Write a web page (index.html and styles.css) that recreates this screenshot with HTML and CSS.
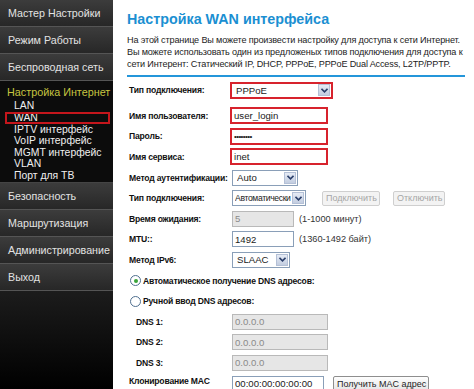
FILE: index.html
```html
<!DOCTYPE html>
<html lang="ru">
<head>
    <meta charset="UTF-8">
    <meta name="viewport" content="width=device-width, initial-scale=1.0">
    <title>Настройка WAN интерфейса</title>
    <link rel="stylesheet" href="styles.css">
</head>
<body>
    <div class="page">
        <!-- Left menu -->
        <nav class="sidebar">
            <div class="menu-item">Мастер Настройки</div>
            <div class="menu-item">Режим Работы</div>
            <div class="menu-item">Беспроводная сеть</div>
            <div class="menu-group">
                <div class="group-title">Настройка Интернет</div>
                <ul class="submenu">
                    <li>LAN</li>
                    <li class="active">WAN</li>
                    <li>IPTV интерфейс</li>
                    <li>VoIP интерфейс</li>
                    <li>MGMT интерфейс</li>
                    <li>VLAN</li>
                    <li>Порт для ТВ</li>
                </ul>
            </div>
            <div class="menu-item">Безопасность</div>
            <div class="menu-item">Маршрутизация</div>
            <div class="menu-item">Администрирование</div>
            <div class="menu-item">Выход</div>
            <div class="sidebar-fill"></div>
        </nav>

        <!-- Main content -->
        <main class="content">
            <h1>Настройка WAN интерфейса</h1>
            <p class="intro">На этой странице Вы можете произвести настройку для доступа к сети Интернет.<br>Вы можете использовать один из предложеных типов подключения для доступа к<br>сети Интерент: Статический IP, DHCP, PPPoE, PPPoE Dual Access, L2TP/PPTP.</p>

            <div class="form">
                <div class="row first">
                    <label class="label">Тип подключения:</label>
                    <span class="select hl w-type"><select><option>PPPoE</option></select><span class="arrow"><svg width="7" height="5" viewBox="0 0 7 5"><path d="M0.5 0.8 L3.5 3.8 L6.5 0.8" fill="none" stroke="#2b3f6b" stroke-width="1.6"/></svg></span></span>
                </div>
                <div class="row">
                    <label class="label">Имя пользователя:</label>
                    <input type="text" class="field hl w-login" value="user_login">
                </div>
                <div class="row">
                    <label class="label">Пароль:</label>
                    <input type="password" class="field hl w-login" value="password">
                </div>
                <div class="row">
                    <label class="label">Имя сервиса:</label>
                    <input type="text" class="field hl w-login" value="inet">
                </div>
                <div class="row">
                    <label class="label">Метод аутентификации:</label>
                    <span class="select w-auth"><select><option>Auto</option></select><span class="arrow"><svg width="7" height="5" viewBox="0 0 7 5"><path d="M0.5 0.8 L3.5 3.8 L6.5 0.8" fill="none" stroke="#2b3f6b" stroke-width="1.6"/></svg></span></span>
                </div>
                <div class="row">
                    <label class="label">Тип подключения:</label>
                    <span class="select w-conn"><select><option>Автоматически</option></select><span class="arrow"><svg width="7" height="5" viewBox="0 0 7 5"><path d="M0.5 0.8 L3.5 3.8 L6.5 0.8" fill="none" stroke="#2b3f6b" stroke-width="1.6"/></svg></span></span>
                    <button class="btn btn-connect" disabled>Подключить</button>
                    <button class="btn btn-disconnect" disabled>Отключить</button>
                </div>
                <div class="row">
                    <label class="label">Время ожидания:</label>
                    <input type="text" class="field w-short" value="5" disabled>
                    <span class="hint">(1-1000 минут)</span>
                </div>
                <div class="row">
                    <label class="label">MTU::</label>
                    <input type="text" class="field w-short" value="1492">
                    <span class="hint">(1360-1492 байт)</span>
                </div>
                <div class="row">
                    <label class="label">Метод IPv6:</label>
                    <span class="select w-ipv6"><select><option>SLAAC</option></select><span class="arrow"><svg width="7" height="5" viewBox="0 0 7 5"><path d="M0.5 0.8 L3.5 3.8 L6.5 0.8" fill="none" stroke="#2b3f6b" stroke-width="1.6"/></svg></span></span>
                </div>
                <div class="row radio-row">
                    <span class="radio checked"></span>
                    <span class="radio-label">Автоматическое получение DNS адресов:</span>
                </div>
                <div class="row radio-row">
                    <span class="radio"></span>
                    <span class="radio-label">Ручной ввод DNS адресов:</span>
                </div>
                <div class="row">
                    <label class="label dns">DNS 1:</label>
                    <input type="text" class="field w-dns" value="0.0.0.0" disabled>
                </div>
                <div class="row">
                    <label class="label dns">DNS 2:</label>
                    <input type="text" class="field w-dns" value="0.0.0.0" disabled>
                </div>
                <div class="row">
                    <label class="label dns">DNS 3:</label>
                    <input type="text" class="field w-dns" value="0.0.0.0" disabled>
                </div>
                <div class="row">
                    <label class="label two-line">Клонирование MAC адреса:</label>
                    <input type="text" class="field w-mac" value="00:00:00:00:00:00">
                    <button class="btn btn-mac">Получить MAC адрес</button>
                </div>
            </div>
        </main>
    </div>
</body>
</html>
```

FILE: styles.css
```css
body {
    margin: 0;
    background: #fff;
    font-family: "Liberation Sans", Arial, sans-serif;
    overflow: hidden;
}
.page {
    display: flex;
    width: 474px;
    height: 389px;
    overflow: hidden;
}

/* sidebar */
.sidebar {
    width: 113px;
    flex-shrink: 0;
    display: flex;
    flex-direction: column;
    background: #000;
}
.menu-item {
    height: 26px;
    line-height: 26px;
    padding-left: 8px;
    font-size: 10.7px;
    color: #e2e2e2;
    background: linear-gradient(#3c3c3c, #272727);
    border-bottom: 1px solid #555;
    white-space: nowrap;
}
.menu-group {
    background: #0c0c0c;
    height: 102px;
    padding-top: 4px;
    box-sizing: border-box;
    border-bottom: 1px solid #444;
}
.group-title {
    font-size: 10.8px;
    color: #c7c540;
    padding-left: 7px;
    line-height: 15px;
    white-space: nowrap;
}
.submenu {
    list-style: none;
    margin: 0;
    padding: 0;
}
.submenu li {
    font-size: 10.4px;
    color: #f0f0f0;
    line-height: 11.5px;
    padding-left: 9px;
    margin-left: 5px;
    margin-right: 3px;
    white-space: nowrap;
}
.submenu li.active {
    outline: 2px solid #c4161c;
    outline-offset: -2px;
    line-height: 12px;
}
.sidebar-fill {
    flex: 1;
    background: linear-gradient(#1c1c1c, #000);
}

/* content */
.content {
    flex: 1;
    padding: 10px 9px 0 14px;
    color: #222;
}
.content h1 {
    margin: 0;
    font-size: 14.3px;
    line-height: 18px;
    color: #1b8fd2;
}
.intro {
    margin: 6px 0 0;
    font-size: 9.1px;
    line-height: 12px;
    padding-bottom: 5px;
    border-bottom: 2px solid #2496da;
    letter-spacing: -0.15px;
    white-space: nowrap;
}

/* form */
.form {
    padding-left: 2px;
    margin-top: 3px;
}
.row {
    display: flex;
    align-items: center;
    height: 20.6px;
    font-size: 9px;
}
.row.first {
    height: 20px;
    margin-bottom: 5.5px;
}
.label {
    width: 101px;
    flex-shrink: 0;
    font-weight: bold;
    font-size: 8.6px;
    color: #111;
    letter-spacing: -0.2px;
}
.label.dns {
    padding-left: 7px;
    width: 94px;
}
.label.two-line {
    line-height: 12px;
    padding-top: 7px;
}
.field {
    height: 16px;
    box-sizing: border-box;
    border: 1px solid #8a9fb8;
    font-family: "Liberation Sans", Arial, sans-serif;
    font-size: 9.6px;
    padding: 0 2px;
    margin: 0 0 0 2px;
    color: #222;
    background: #fff;
}
.field:disabled {
    background: #e6e6e6;
    color: #8a8a8a;
    border-color: #b9b9b9;
}
.field.hl {
    border: 2px solid #d7232d;
    margin-left: 0;
    height: 17px;
}
input[type="password"].field {
    font-size: 8px;
    letter-spacing: -0.6px;
}
.w-login { width: 98px; }
.w-short { width: 62px; }
.w-dns { width: 96px; }
.w-mac { width: 92px; }

.select {
    display: inline-flex;
    align-items: center;
    height: 16px;
    box-sizing: border-box;
    border: 1px solid #8a9fb8;
    margin-left: 2px;
    background: #fff;
}
.select select {
    appearance: none;
    -webkit-appearance: none;
    border: none;
    background: transparent;
    font-family: "Liberation Sans", Arial, sans-serif;
    font-size: 9.6px;
    color: #222;
    padding: 0 0 0 4px;
    flex: 1;
    min-width: 0;
    height: 14px;
    outline: none;
}
.select .arrow {
    width: 12px;
    height: 12px;
    margin-right: 1px;
    flex-shrink: 0;
    display: flex;
    align-items: center;
    justify-content: center;
    background: linear-gradient(#e6ebf5, #c3cde0);
    border: 1px solid #b4c0d6;
    box-sizing: border-box;
}
.select.hl {
    border: 2px solid #d7232d;
    margin-left: 0;
    height: 17px;
}
.w-type { width: 103px; }
.w-auth { width: 66px; }
.w-conn { width: 74px; }
.w-conn select { font-size: 8.6px; letter-spacing: -0.35px; padding-left: 2px; }
.w-ipv6 { width: 58px; }

.btn {
    height: 15px;
    font-family: "Liberation Sans", Arial, sans-serif;
    font-size: 9px;
    padding: 0 3px;
    border-radius: 2px;
    border: 1px solid #8e8e8e;
    background: linear-gradient(#fefefe, #e4e4e4);
    color: #1e1e1e;
    white-space: nowrap;
    cursor: pointer;
}
.btn:disabled {
    border-color: #cfcfcf;
    background: #f3f3f3;
    color: #a6a6a6;
}
.btn-connect { margin-left: 16px; width: 58px; }
.btn-disconnect { margin-left: 13px; width: 52px; }
.btn-mac { margin-left: 9px; width: 96px; height: 16px; }

.hint {
    margin-left: 5px;
    font-size: 9.2px;
    color: #333;
}
.radio-row {
    padding-left: 1px;
}
.radio {
    width: 9px;
    height: 9px;
    border: 1px solid #4f6f8f;
    border-radius: 50%;
    background: #fff;
    display: inline-flex;
    align-items: center;
    justify-content: center;
    margin-right: 2px;
}
.radio.checked::after {
    content: "";
    width: 4px;
    height: 4px;
    border-radius: 50%;
    background: #3aa43a;
}
.radio-label {
    font-weight: bold;
    font-size: 8.6px;
    letter-spacing: -0.2px;
    color: #111;
}
```
